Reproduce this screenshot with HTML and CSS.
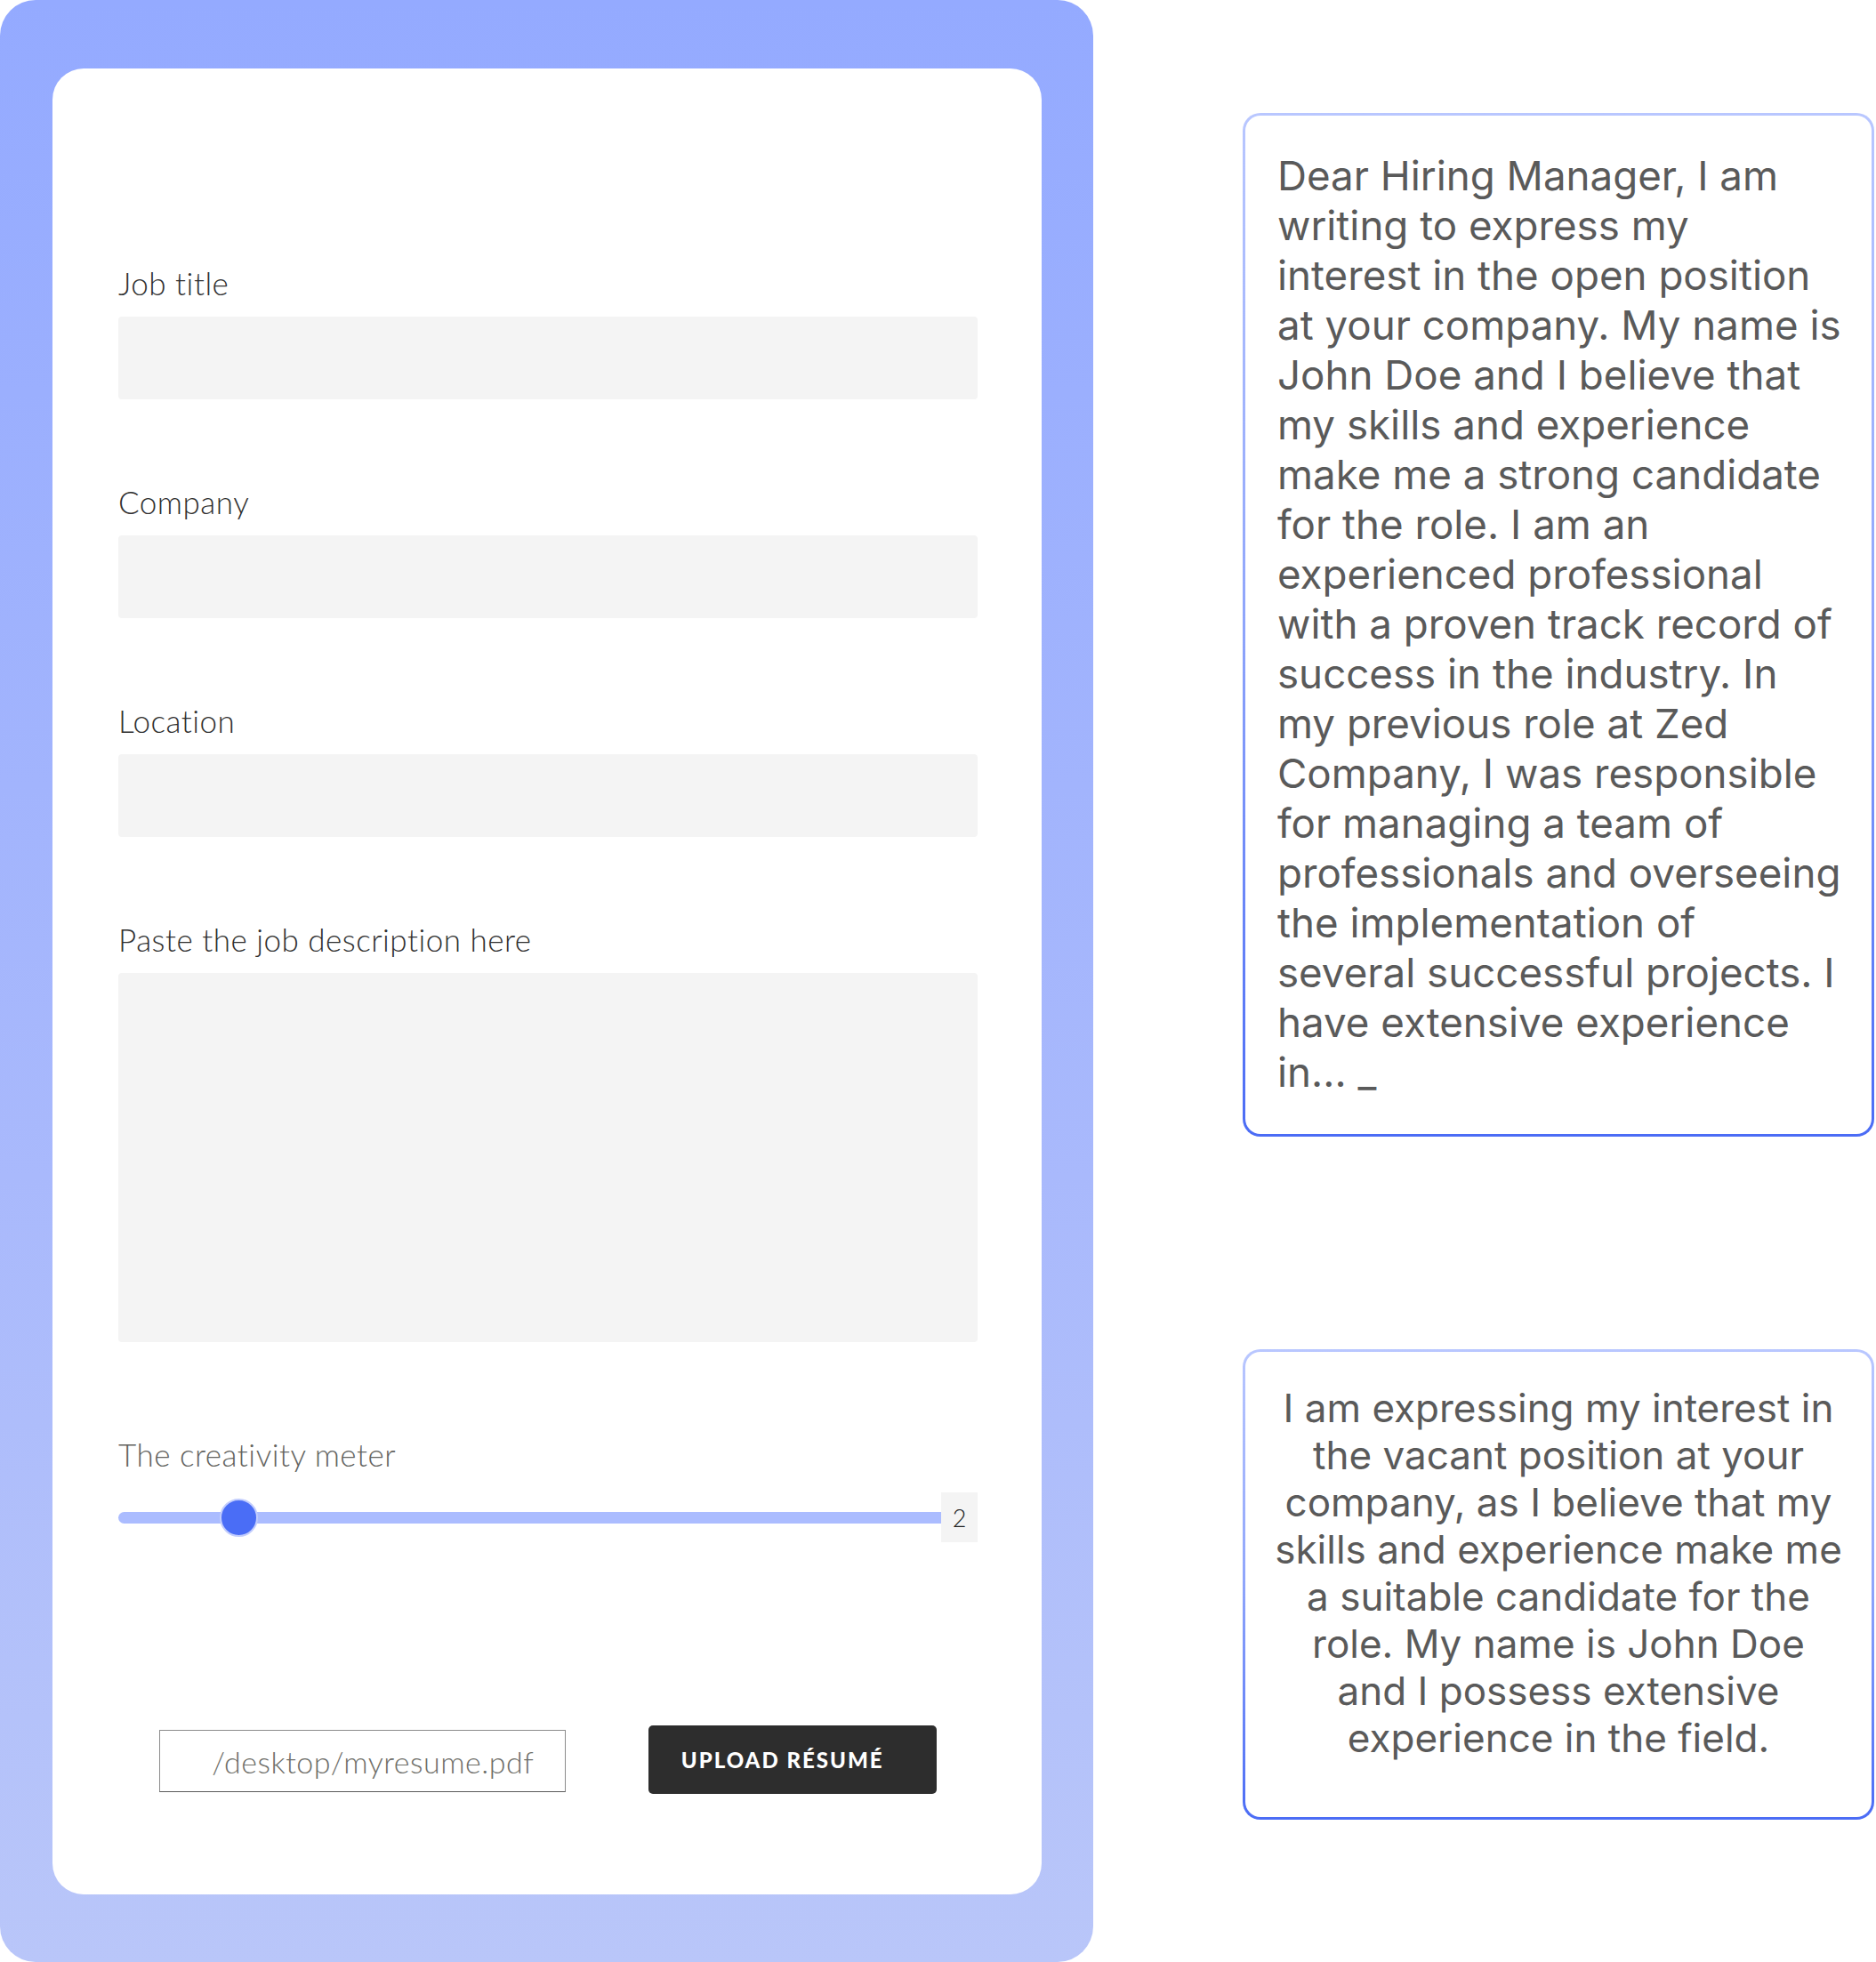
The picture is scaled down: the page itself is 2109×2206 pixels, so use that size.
FILE: index.html
```html
<!DOCTYPE html>
<html lang="en">
<head>
<meta charset="utf-8">
<title>Cover letter generator</title>
<link rel="stylesheet" href="styles.css">
</head>
<body>
<div class="page">
  <section class="panel">
    <div class="card">
      <form class="form">
        <div class="field">
          <label class="label">Job title</label>
          <div class="input"></div>
        </div>
        <div class="field">
          <label class="label">Company</label>
          <div class="input"></div>
        </div>
        <div class="field">
          <label class="label">Location</label>
          <div class="input"></div>
        </div>
        <div class="field">
          <label class="label">Paste the job description here</label>
          <div class="input textarea"></div>
        </div>
        <div class="meter">
          <div class="label label-muted">The creativity meter</div>
          <div class="slider-row">
            <div class="track"><span class="thumb"></span></div>
            <div class="value">2</div>
          </div>
        </div>
        <div class="upload-row">
          <div class="file">/desktop/myresume.pdf</div>
          <button type="button" class="btn">UPLOAD RÉSUMÉ</button>
        </div>
      </form>
    </div>
  </section>
  <aside class="results">
    <p class="result result-long">Dear Hiring Manager, I am<br>writing to express my<br>interest in the open position<br>at your company. My name is<br>John Doe and I believe that<br>my skills and experience<br>make me a strong candidate<br>for the role. I am an<br>experienced professional<br>with a proven track record of<br>success in the industry. In<br>my previous role at Zed<br>Company, I was responsible<br>for managing a team of<br>professionals and overseeing<br>the implementation of<br>several successful projects. I<br>have extensive experience<br>in... _</p>
    <p class="result result-short">I am expressing my interest in<br>the vacant position at your<br>company, as I believe that my<br>skills and experience make me<br>a suitable candidate for the<br>role. My name is John Doe<br>and I possess extensive<br>experience in the field.</p>
  </aside>
</div>
</body>
</html>
```

FILE: styles.css
```css
* { box-sizing: border-box; }

html, body {
  margin: 0;
  padding: 0;
  background: #ffffff;
}

.page {
  display: flex;
  align-items: flex-start;
  width: 2109px;
  height: 2206px;
}

.panel {
  width: 1229px;
  height: 2206px;
  flex: none;
  padding: 77px 58px 76px 59px;
  border-radius: 40px;
  background: linear-gradient(180deg, #94aaff 0%, #a9b9fc 60%, #b9c6f9 100%);
}

.card {
  height: 100%;
  background: #ffffff;
  border-radius: 35px;
  padding: 221px 72px 0 74px;
}

.form {
  display: flex;
  flex-direction: column;
}

.field {
  display: flex;
  flex-direction: column;
  margin-bottom: 95px;
}

.field:nth-child(4) {
  margin-bottom: 106px;
}

.label {
  font-family: "Lato", "Liberation Sans", sans-serif;
  font-weight: 300;
  font-size: 35px;
  line-height: 40px;
  height: 40px;
  color: #2f2f2f;
  letter-spacing: 0.5px;
  margin-bottom: 18px;
}

.label-muted {
  color: #64645f;
  margin-bottom: 23px;
}

.input {
  height: 93px;
  background: #f4f4f4;
  border-radius: 4px;
}

.textarea {
  height: 415px;
}

.slider-row {
  display: flex;
  align-items: center;
  height: 56px;
}

.track {
  position: relative;
  flex: 1;
  height: 13px;
  border-radius: 7px 0 0 7px;
  background: #abbcff;
}

.thumb {
  position: absolute;
  left: 114px;
  top: 50%;
  width: 43px;
  height: 43px;
  margin-top: -21.5px;
  border-radius: 50%;
  background: #4a6df6;
  border: 2px solid #c2cdfd;
}

.value {
  width: 41px;
  height: 56px;
  background: #f4f4f4;
  display: flex;
  align-items: center;
  justify-content: center;
  font-family: "Lato", "Liberation Sans", sans-serif;
  font-weight: 300;
  font-size: 27px;
  color: #222222;
}

.upload-row {
  display: flex;
  justify-content: space-around;
  align-items: center;
  margin-top: 206px;
  height: 77px;
}

.file {
  width: 457px;
  height: 70px;
  border: 1px solid #8c8c8c;
  border-bottom-color: #5a5a5a;
  display: flex;
  align-items: center;
  padding-left: 58px;
  font-family: "Lato", "Liberation Sans", sans-serif;
  font-weight: 300;
  font-size: 34px;
  letter-spacing: 0.5px;
  color: #6e6e69;
  margin-top: 3px;
}

.btn {
  width: 324px;
  height: 77px;
  border: none;
  border-radius: 5px;
  background: #2d2d2d;
  color: #ffffff;
  font-family: "Lato", "Liberation Sans", sans-serif;
  font-weight: 900;
  font-size: 24px;
  letter-spacing: 2px;
  text-align: left;
  padding: 0 0 0 37px;
  cursor: pointer;
}

.results {
  width: 710px;
  flex: none;
  margin-left: 168px;
  padding-top: 127px;
  display: flex;
  flex-direction: column;
}

.result {
  margin: 0;
  border: 3px solid transparent;
  border-radius: 20px;
  background:
    linear-gradient(#ffffff, #ffffff) padding-box,
    linear-gradient(180deg, #b9c7ff 0%, #8fa5fb 50%, #4b6cf5 100%) border-box;
  font-family: "Inter", "Noto Sans", sans-serif;
  font-weight: 400;
  color: #5a5a5a;
  white-space: nowrap;
}

.result-long {
  font-size: 45.7px;
  line-height: 56px;
  padding: 40px 20px 41px 36px;
}

.result-short {
  margin-top: 239px;
  height: 529px;
  font-size: 44px;
  line-height: 53px;
  padding: 37px 10px 0;
  text-align: center;
}
```
